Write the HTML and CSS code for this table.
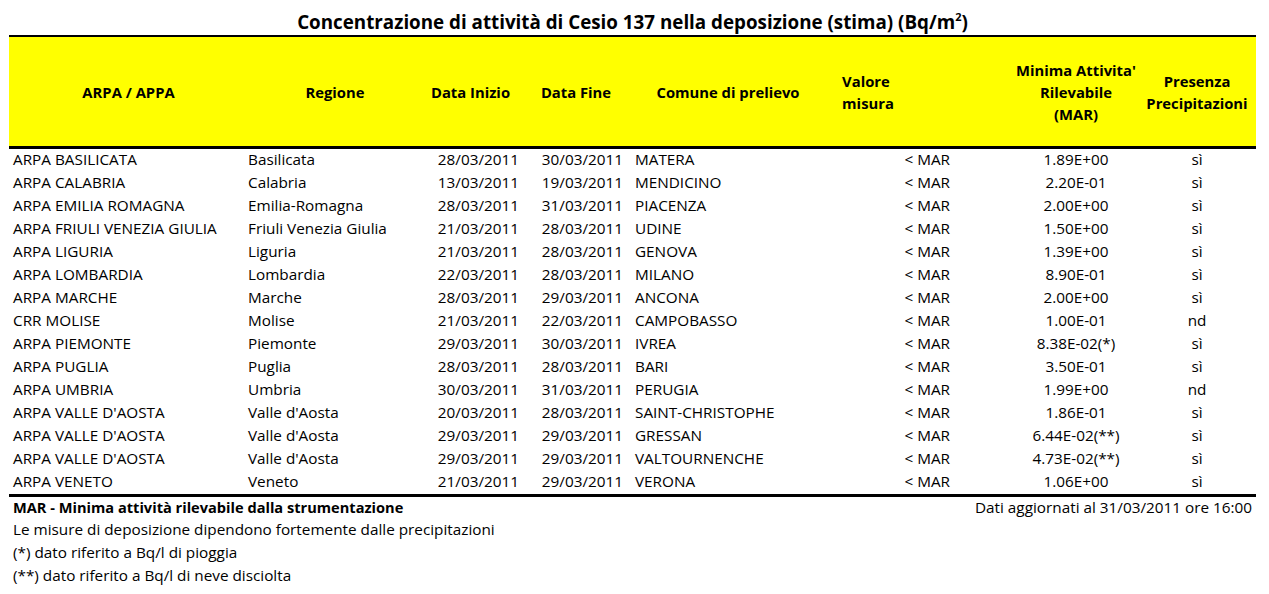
FILE: index.html
```html
<!DOCTYPE html>
<html lang="it">
<head>
<meta charset="utf-8">
<title>Concentrazione di attività di Cesio 137 nella deposizione</title>
<link rel="stylesheet" href="styles.css">
</head>
<body>
<div class="sheet">
  <h1 class="title">Concentrazione di attività di Cesio 137 nella deposizione (stima) (Bq/m<sup>2</sup>)</h1>
  <div class="table">
    <div class="row head">
      <div class="c a">ARPA / APPA</div>
      <div class="c b">Regione</div>
      <div class="c d1">Data Inizio</div>
      <div class="c d2">Data Fine</div>
      <div class="c e">Comune di prelievo</div>
      <div class="c f"><span class="lines">Valore<br>misura</span></div>
      <div class="c g">Minima Attivita'<br>Rilevabile<br>(MAR)</div>
      <div class="c h">Presenza<br>Precipitazioni</div>
    </div>
    <div class="body">
      <div class="row"><div class="c a">ARPA BASILICATA</div><div class="c b">Basilicata</div><div class="c d1">28/03/2011</div><div class="c d2">30/03/2011</div><div class="c e">MATERA</div><div class="c f">&lt; MAR</div><div class="c g">1.89E+00</div><div class="c h">sì</div></div>
      <div class="row"><div class="c a">ARPA CALABRIA</div><div class="c b">Calabria</div><div class="c d1">13/03/2011</div><div class="c d2">19/03/2011</div><div class="c e">MENDICINO</div><div class="c f">&lt; MAR</div><div class="c g">2.20E-01</div><div class="c h">sì</div></div>
      <div class="row"><div class="c a">ARPA EMILIA ROMAGNA</div><div class="c b">Emilia-Romagna</div><div class="c d1">28/03/2011</div><div class="c d2">31/03/2011</div><div class="c e">PIACENZA</div><div class="c f">&lt; MAR</div><div class="c g">2.00E+00</div><div class="c h">sì</div></div>
      <div class="row"><div class="c a">ARPA FRIULI VENEZIA GIULIA</div><div class="c b">Friuli Venezia Giulia</div><div class="c d1">21/03/2011</div><div class="c d2">28/03/2011</div><div class="c e">UDINE</div><div class="c f">&lt; MAR</div><div class="c g">1.50E+00</div><div class="c h">sì</div></div>
      <div class="row"><div class="c a">ARPA LIGURIA</div><div class="c b">Liguria</div><div class="c d1">21/03/2011</div><div class="c d2">28/03/2011</div><div class="c e">GENOVA</div><div class="c f">&lt; MAR</div><div class="c g">1.39E+00</div><div class="c h">sì</div></div>
      <div class="row"><div class="c a">ARPA LOMBARDIA</div><div class="c b">Lombardia</div><div class="c d1">22/03/2011</div><div class="c d2">28/03/2011</div><div class="c e">MILANO</div><div class="c f">&lt; MAR</div><div class="c g">8.90E-01</div><div class="c h">sì</div></div>
      <div class="row"><div class="c a">ARPA MARCHE</div><div class="c b">Marche</div><div class="c d1">28/03/2011</div><div class="c d2">29/03/2011</div><div class="c e">ANCONA</div><div class="c f">&lt; MAR</div><div class="c g">2.00E+00</div><div class="c h">sì</div></div>
      <div class="row"><div class="c a">CRR MOLISE</div><div class="c b">Molise</div><div class="c d1">21/03/2011</div><div class="c d2">22/03/2011</div><div class="c e">CAMPOBASSO</div><div class="c f">&lt; MAR</div><div class="c g">1.00E-01</div><div class="c h">nd</div></div>
      <div class="row"><div class="c a">ARPA PIEMONTE</div><div class="c b">Piemonte</div><div class="c d1">29/03/2011</div><div class="c d2">30/03/2011</div><div class="c e">IVREA</div><div class="c f">&lt; MAR</div><div class="c g">8.38E-02(*)</div><div class="c h">sì</div></div>
      <div class="row"><div class="c a">ARPA PUGLIA</div><div class="c b">Puglia</div><div class="c d1">28/03/2011</div><div class="c d2">28/03/2011</div><div class="c e">BARI</div><div class="c f">&lt; MAR</div><div class="c g">3.50E-01</div><div class="c h">sì</div></div>
      <div class="row"><div class="c a">ARPA UMBRIA</div><div class="c b">Umbria</div><div class="c d1">30/03/2011</div><div class="c d2">31/03/2011</div><div class="c e">PERUGIA</div><div class="c f">&lt; MAR</div><div class="c g">1.99E+00</div><div class="c h">nd</div></div>
      <div class="row"><div class="c a">ARPA VALLE D'AOSTA</div><div class="c b">Valle d'Aosta</div><div class="c d1">20/03/2011</div><div class="c d2">28/03/2011</div><div class="c e">SAINT-CHRISTOPHE</div><div class="c f">&lt; MAR</div><div class="c g">1.86E-01</div><div class="c h">sì</div></div>
      <div class="row"><div class="c a">ARPA VALLE D'AOSTA</div><div class="c b">Valle d'Aosta</div><div class="c d1">29/03/2011</div><div class="c d2">29/03/2011</div><div class="c e">GRESSAN</div><div class="c f">&lt; MAR</div><div class="c g">6.44E-02(**)</div><div class="c h">sì</div></div>
      <div class="row"><div class="c a">ARPA VALLE D'AOSTA</div><div class="c b">Valle d'Aosta</div><div class="c d1">29/03/2011</div><div class="c d2">29/03/2011</div><div class="c e">VALTOURNENCHE</div><div class="c f">&lt; MAR</div><div class="c g">4.73E-02(**)</div><div class="c h">sì</div></div>
      <div class="row"><div class="c a">ARPA VENETO</div><div class="c b">Veneto</div><div class="c d1">21/03/2011</div><div class="c d2">29/03/2011</div><div class="c e">VERONA</div><div class="c f">&lt; MAR</div><div class="c g">1.06E+00</div><div class="c h">sì</div></div>
    </div>
  </div>
  <div class="notes">
    <div class="note first"><strong>MAR - Minima attività rilevabile dalla strumentazione</strong><span>Dati aggiornati al 31/03/2011 ore 16:00</span></div>
    <div class="note">Le misure di deposizione dipendono fortemente dalle precipitazioni</div>
    <div class="note">(*) dato riferito a Bq/l di pioggia</div>
    <div class="note">(**) dato riferito a Bq/l di neve disciolta</div>
  </div>
</div>
</body>
</html>
```
FILE: styles.css
```css
html, body {
  margin: 0;
  padding: 0;
  background: #fff;
}
body {
  font-family: "Open Sans", "Liberation Sans", Arial, sans-serif;
  font-size: 15.3px;
  color: #000;
}
.sheet {
  width: 1247px;
  margin-left: 9px;
}
.title {
  margin: 0;
  height: 35px;
  box-sizing: border-box;
  padding-top: 9px;
  font-size: 18.8px;
  line-height: 26px;
  font-weight: 700;
  text-align: center;
}
.title sup {
  font-size: 11px;
  line-height: 0;
  vertical-align: 8px;
}
.row {
  display: grid;
  grid-template-columns: 235px 178px 101px 108px 190px 134px 183px 118px;
  height: 23px;
}
.c {
  line-height: 21px;
  white-space: nowrap;
  overflow: visible;
}
.head {
  height: 109px;
  background: #ffff00;
  border-top: 2px solid #000;
  border-bottom: 3px solid #000;
  font-weight: 700;
  font-size: 14.8px;
}
.head .c {
  display: flex;
  align-items: center;
  justify-content: center;
  text-align: center;
  line-height: 22px;
}
.head .d2 { padding-left: 6px; }
.head .f { padding-right: 40px; }
.head .f .lines { text-align: left; }
.head .g { padding-left: 59px; }
.body {
  border-bottom: 3px solid #000;
}
.a, .b, .e { padding-left: 4px; }
.d1 { text-align: right; padding-right: 4px; }
.d2 { text-align: right; padding-right: 8px; }
.f { text-align: right; padding-right: 5px; }
.g { text-align: center; padding-left: 59px; }
.h { text-align: center; }
.notes {
  padding: 0 4px;
}
.note {
  height: 23px;
  line-height: 23px;
}
.note.first {
  height: 21px;
  line-height: 20px;
  display: flex;
  justify-content: space-between;
}
.note strong {
  font-weight: 700;
  font-size: 14.6px;
}
```
